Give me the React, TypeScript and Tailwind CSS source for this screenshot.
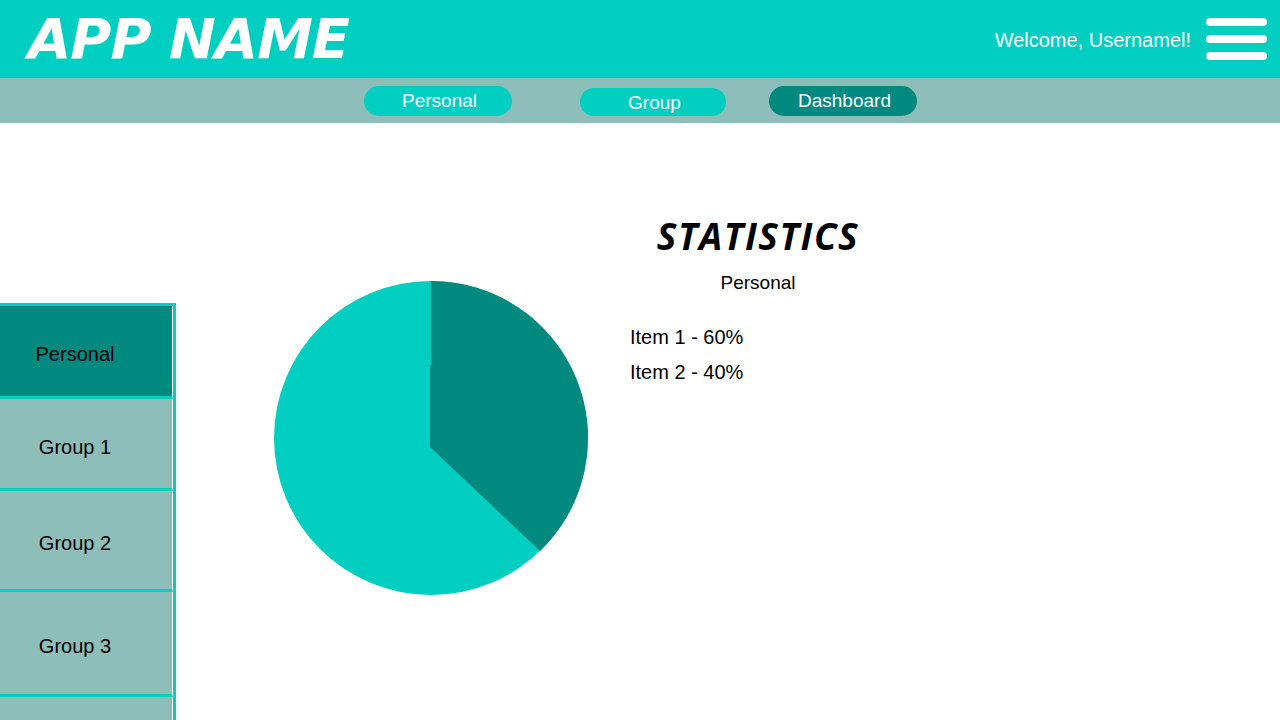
import React from 'react';

const NAV = [
  { label: 'Personal', cls: 'ml-[364px] w-[148px] h-[30px] bg-[#00cec1]' },
  { label: 'Group', cls: 'ml-[68px] w-[146px] h-[28px] mt-[3px] bg-[#00cec1]' },
  { label: 'Dashboard', cls: 'ml-[43px] w-[148px] h-[30px] bg-[#00897f]' },
];

const SIDE = [
  { label: 'Personal', cls: 'h-[93px] bg-[#00897f]' },
  { label: 'Group 1', cls: 'h-[92px] bg-[#8ebeb9]' },
  { label: 'Group 2', cls: 'h-[101px] bg-[#8ebeb9]' },
  { label: 'Group 3', cls: 'h-[105px] bg-[#8ebeb9]' },
  { label: '', cls: 'h-[60px] bg-[#8ebeb9]' },
];

export default function App() {
  return (
    <div className="w-[1280px] h-[720px] overflow-hidden bg-white font-['Liberation_Sans',Arial,sans-serif]">
      {/* Top header */}
      <header className="h-[78px] bg-[#00cec1] flex items-center justify-between pl-[28px] pr-[13px]">
        <h1 className="text-white italic font-bold text-[56px] leading-none font-['DejaVu_Sans',sans-serif] tracking-[-1px] pr-[4px]">
          APP NAME
        </h1>
        <div className="flex items-center gap-[15px]">
          <span className="text-white text-[20px] leading-none mt-[2px]">Welcome, Usernamel!</span>
          <div className="flex flex-col gap-[9px]">
            <div className="w-[61px] h-[8px] rounded-full bg-white"></div>
            <div className="w-[61px] h-[8px] rounded-full bg-white"></div>
            <div className="w-[61px] h-[8px] rounded-full bg-white"></div>
          </div>
        </div>
      </header>

      {/* Tab bar */}
      <nav className="h-[45px] bg-[#8ebeb9] flex items-center">
        {NAV.map((n) => (
          <div
            key={n.label}
            className={`${n.cls} rounded-full flex items-center justify-center text-white text-[19px] leading-none pl-[3px]`}
          >
            {n.label}
          </div>
        ))}
      </nav>

      <main className="flex">
        {/* Side list */}
        <aside className="w-[176px] mt-[180px] border-t-[3px] border-r-[3px] border-[#00cec1] shrink-0">
          {SIDE.map((s, i) => (
            <div
              key={i}
              className={`${s.cls} border-b-[3px] border-b-[#00cec1] border-r border-r-white flex items-center justify-center text-black text-[20px] leading-none pr-[22px] pt-[6px]`}
            >
              {s.label}
            </div>
          ))}
        </aside>

        {/* Pie chart */}
        <div className="ml-[96px] mt-[156px] shrink-0">
          <svg width="320" height="320" viewBox="0 0 320 320">
            <circle cx="159" cy="159" r="157" fill="#00cec1" />
            <path d="M159 2 A157 157 0 0 1 268 272 L158 168 L158 86 L159 86 Z" fill="#00897f" />
          </svg>
        </div>

        {/* Stats */}
        <section className="ml-[38px] mt-[94px] w-[256px]">
          <h2 className="text-center italic font-bold text-[37px] leading-none text-black font-['Open_Sans',sans-serif] tracking-[1.5px]">
            STATISTICS
          </h2>
          <p className="text-center text-[19px] leading-none mt-[19px]">Personal</p>
          <ul className="mt-[35px] space-y-[15px] text-[20px] leading-none">
            <li>Item 1 - 60%</li>
            <li>Item 2 - 40%</li>
          </ul>
        </section>
      </main>
    </div>
  );
}
